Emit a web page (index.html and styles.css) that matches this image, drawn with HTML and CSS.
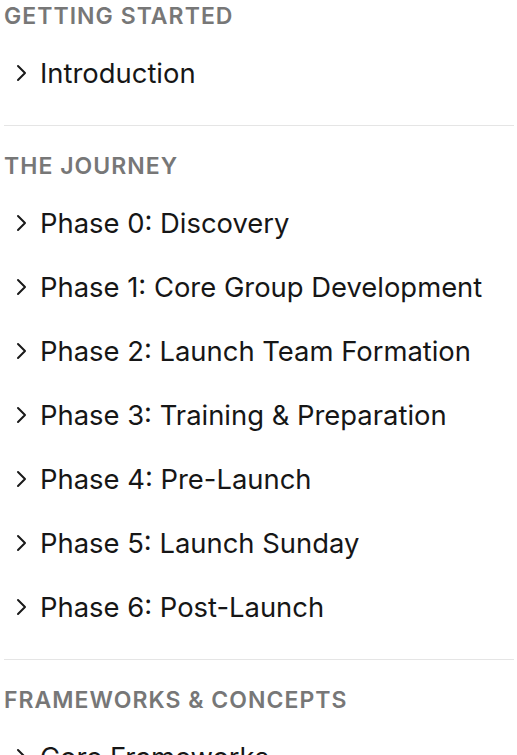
FILE: index.html
```html
<!DOCTYPE html>
<html lang="en">
<head>
    <meta charset="UTF-8">
    <meta name="viewport" content="width=device-width, initial-scale=1.0">
    <title>Guide</title>
    <link rel="stylesheet" href="styles.css">
</head>
<body>
    <nav class="sidebar">
        <div class="section">
            <h3 class="section-title">Getting Started</h3>
            <ul class="nav-list">
                <li><a class="nav-item" href="#"><svg class="chevron" viewBox="0 0 11 18"><path d="M2 2l7 7-7 7"/></svg>Introduction</a></li>
            </ul>
        </div>

        <div class="section">
            <h3 class="section-title">The Journey</h3>
            <ul class="nav-list">
                <li><a class="nav-item" href="#"><svg class="chevron" viewBox="0 0 11 18"><path d="M2 2l7 7-7 7"/></svg>Phase 0: Discovery</a></li>
                <li><a class="nav-item" href="#"><svg class="chevron" viewBox="0 0 11 18"><path d="M2 2l7 7-7 7"/></svg>Phase 1: Core Group Development</a></li>
                <li><a class="nav-item" href="#"><svg class="chevron" viewBox="0 0 11 18"><path d="M2 2l7 7-7 7"/></svg>Phase 2: Launch Team Formation</a></li>
                <li><a class="nav-item" href="#"><svg class="chevron" viewBox="0 0 11 18"><path d="M2 2l7 7-7 7"/></svg>Phase 3: Training &amp; Preparation</a></li>
                <li><a class="nav-item" href="#"><svg class="chevron" viewBox="0 0 11 18"><path d="M2 2l7 7-7 7"/></svg>Phase 4: Pre-Launch</a></li>
                <li><a class="nav-item" href="#"><svg class="chevron" viewBox="0 0 11 18"><path d="M2 2l7 7-7 7"/></svg>Phase 5: Launch Sunday</a></li>
                <li><a class="nav-item" href="#"><svg class="chevron" viewBox="0 0 11 18"><path d="M2 2l7 7-7 7"/></svg>Phase 6: Post-Launch</a></li>
            </ul>
        </div>

        <div class="section">
            <h3 class="section-title">Frameworks &amp; Concepts</h3>
            <ul class="nav-list">
                <li><a class="nav-item" href="#"><svg class="chevron" viewBox="0 0 11 18"><path d="M2 2l7 7-7 7"/></svg>Core Frameworks</a></li>
            </ul>
        </div>
    </nav>
</body>
</html>
```

FILE: styles.css
```css
* {
    margin: 0;
    padding: 0;
    box-sizing: border-box;
}

body {
    font-family: 'Inter', 'Liberation Sans', sans-serif;
    background: #fff;
    color: #161616;
    overflow: hidden;
}

.sidebar {
    padding: 0 3px 0 4px;
}

.section {
    padding: 24px 0 20px;
    border-bottom: 1px solid #e5e5e5;
}

.section:first-child {
    padding-top: 0;
}

.section-title {
    font-size: 23px;
    font-weight: 600;
    line-height: 32px;
    letter-spacing: 0.045em;
    text-transform: uppercase;
    color: #777;
    margin-bottom: 9px;
}

.nav-list {
    list-style: none;
}

.nav-item {
    display: flex;
    align-items: center;
    height: 64px;
    font-size: 27.4px;
    color: #161616;
    text-decoration: none;
}

.chevron {
    width: 11px;
    height: 18px;
    margin: 0 13px 0 12px;
    fill: none;
    stroke: #1a1a1a;
    stroke-width: 2;
    stroke-linecap: round;
    stroke-linejoin: round;
}
```
